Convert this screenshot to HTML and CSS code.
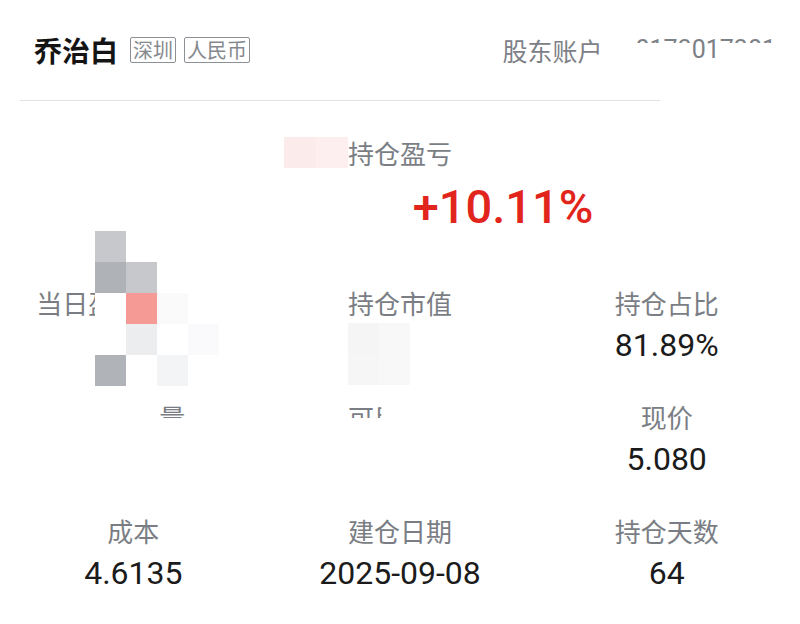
FILE: index.html
```html
<!DOCTYPE html>
<html lang="zh-CN">
<head>
<meta charset="utf-8">
<title>持仓详情</title>
<link rel="stylesheet" href="styles.css">
</head>
<body>
<div class="page">
  <header class="header">
    <div class="stock">
      <span class="name">乔治白</span>
      <span class="tag">深圳</span>
      <span class="tag">人民币</span>
    </div>
    <div class="account">
      <span class="acc-label">股东账户</span>
      <span class="acc-no"><span class="cut">0173</span>01<span class="cut">7301</span></span>
    </div>
  </header>
  <div class="divider"></div>

  <section class="summary">
    <div class="sum-label-row">
      <div class="pink-mask"><i></i><i></i></div>
      <span class="label">持仓盈亏</span>
      <span class="spacer"></span>
    </div>
    <div class="sum-value-row"><span class="hidden-amount"></span><span class="pct">+10.11%</span></div>
  </section>

  <section class="grid">
    <div class="cell">
      <div class="label label-wide">当日盈亏（元）</div>
      <div class="value"></div>
    </div>
    <div class="cell">
      <div class="label">持仓市值</div>
      <div class="value"><div class="soft-mask"><i></i><i></i><i></i><i></i></div></div>
    </div>
    <div class="cell">
      <div class="label">持仓占比</div>
      <div class="value">81.89%</div>
    </div>

    <div class="cell">
      <div class="label"><span class="clip clip-keep-right">持仓数量</span></div>
      <div class="value"></div>
    </div>
    <div class="cell">
      <div class="label"><span class="clip clip-keep-left">可用数量</span></div>
      <div class="value"></div>
    </div>
    <div class="cell">
      <div class="label">现价</div>
      <div class="value">5.080</div>
    </div>

    <div class="cell">
      <div class="label">成本</div>
      <div class="value">4.6135</div>
    </div>
    <div class="cell">
      <div class="label">建仓日期</div>
      <div class="value">2025-09-08</div>
    </div>
    <div class="cell">
      <div class="label">持仓天数</div>
      <div class="value">64</div>
    </div>
  </section>

  <div class="mosaic">
    <i class="g1"></i><i class="w"></i><i class="w"></i><i class="w"></i><i class="w"></i>
    <i class="g2"></i><i class="g1"></i><i class="w"></i><i class="w"></i><i class="w"></i>
    <i class="w"></i><i class="r"></i><i class="l1"></i><i class="w"></i><i class="w"></i>
    <i class="w"></i><i class="l2"></i><i class="w"></i><i class="l3"></i><i class="w"></i>
    <i class="g3"></i><i class="w"></i><i class="l4"></i><i class="w"></i><i class="w"></i>
  </div>
</div>
</body>
</html>
```
FILE: styles.css
```css
* {
  box-sizing: border-box;
  margin: 0;
  padding: 0;
}

body {
  margin: 0;
  background: #ffffff;
  font-family: "Noto Sans CJK SC", "Noto Sans", sans-serif;
  color: #1b1b1b;
}

.page {
  position: relative;
  width: 800px;
  height: 624px;
  overflow: hidden;
  background: #ffffff;
}

/* ---------- header ---------- */
.header {
  height: 100px;
  display: flex;
  align-items: center;
  padding: 0 24px 0 34px;
}

.stock {
  display: flex;
  align-items: center;
}

.name {
  font-size: 28px;
  font-weight: 600;
  line-height: 36px;
  color: #141414;
  margin-right: 4px;
}

.tag {
  margin-left: 8px;
  font-size: 20px;
  line-height: 24px;
  padding: 0 2px;
  border: 1px solid #8d9095;
  border-radius: 2px;
  color: #85898e;
}

.account {
  margin-left: auto;
  display: flex;
  align-items: center;
  gap: 33px;
  color: #7d8187;
}

.acc-label {
  font-size: 25px;
  line-height: 30px;
}

.acc-no {
  font-family: Roboto, "Liberation Sans", sans-serif;
  font-size: 25px;
  line-height: 30px;
}

.cut {
  display: inline-block;
  height: 30px;
  clip-path: inset(0 0 22px 0);
}

.divider {
  height: 1px;
  background: #e3e3e3;
  margin: 0 140px 0 20px;
}

/* ---------- summary ---------- */
.summary {
  padding-top: 36px;
}

.sum-label-row {
  display: flex;
  justify-content: center;
  align-items: flex-start;
}

.pink-mask {
  display: flex;
  width: 64px;
  height: 31px;
}

.pink-mask i {
  display: block;
  width: 32px;
  height: 31px;
  background: #fcebeb;
}

.pink-mask i + i {
  background: #fdefef;
}

.spacer {
  width: 64px;
}

.label {
  font-size: 26px;
  line-height: 32px;
  color: #7a7e84;
}

.grid .label {
  margin-bottom: 4px;
}

.label-wide {
  padding-right: 12px;
}

.sum-value-row {
  margin-top: 13px;
  height: 50px;
  line-height: 50px;
  text-align: center;
  white-space: nowrap;
}

.hidden-amount {
  display: inline-block;
  width: 206px;
}

.pct {
  font-family: Roboto, "Liberation Sans", sans-serif;
  font-size: 47px;
  font-weight: 500;
  color: #e2251c;
}

/* ---------- grid ---------- */
.grid {
  margin-top: 55px;
  display: grid;
  grid-template-columns: repeat(3, 1fr);
  row-gap: 34px;
  text-align: center;
}

.value {
  font-family: Roboto, "Liberation Sans", sans-serif;
  font-size: 32px;
  line-height: 44px;
  height: 44px;
  color: #1b1b1b;
}

.soft-mask {
  width: 104px;
  margin: 1px auto 0;
  display: grid;
  grid-template-columns: 31px 31px;
  grid-auto-rows: 31px;
}

.soft-mask i:nth-child(1) { background: #f5f5f6; }
.soft-mask i:nth-child(2) { background: #f8f8f8; }
.soft-mask i:nth-child(3) { background: #f6f6f6; }
.soft-mask i:nth-child(4) { background: #f8f8f9; }

.clip {
  display: inline-block;
}

.clip-keep-right {
  clip-path: inset(0 0 15px 75%);
}

.clip-keep-left {
  clip-path: inset(0 68% 15px 0);
}

/* ---------- privacy mosaic overlay ---------- */
.mosaic {
  position: absolute;
  left: 95px;
  top: 231px;
  display: grid;
  grid-template-columns: repeat(5, 31px);
  grid-auto-rows: 31px;
}

.mosaic i { display: block; }
.mosaic .w { background: #ffffff; }
.mosaic .g1 { background: #c6c8cb; }
.mosaic .g2 { background: #afb2b6; }
.mosaic .g3 { background: #b0b3b7; }
.mosaic .r { background: #f59a94; }
.mosaic .l1 { background: #fafafa; }
.mosaic .l2 { background: #ebedef; }
.mosaic .l3 { background: #fafafc; }
.mosaic .l4 { background: #f3f4f5; }
```
